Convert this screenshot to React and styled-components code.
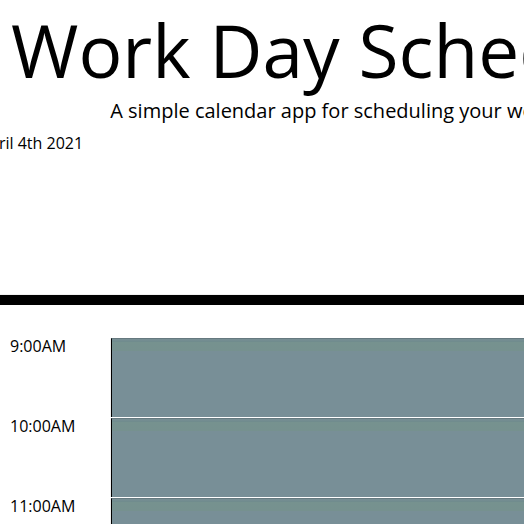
import React from "react";
import styled, { createGlobalStyle } from "styled-components";

const Global = createGlobalStyle`
  html, body { margin: 0; padding: 0; background: #ffffff; overflow: hidden; }
  body { font-family: "Open Sans", "DejaVu Sans", sans-serif; font-size: 16px; line-height: 1; color: #000; }
`;

const Page = styled.div`
  width: 760px;
`;

const Header = styled.header`
  text-align: center;
  padding: 6px 0 0;
  height: 289px;
  border-bottom: 10px solid #000;
  box-shadow: 0 -2px 0 -1px #f0f0f0 inset;
`;

const Title = styled.h1`
  font-size: 73px;
  font-weight: 400;
  line-height: 1.2;
  margin: 0 0 0 -51px;
`;

const Lead = styled.p`
  font-size: 20px;
  font-weight: 400;
  line-height: 1.5;
  margin: 2px 0 0 -58px;
`;

const DateLine = styled.p`
  font-size: 16px;
  font-weight: 400;
  line-height: 1.5;
  margin: 5px 0 0 -21px;
  text-align: left;
`;

const Schedule = styled.main`
  padding-top: 32px;
`;

const Row = styled.div`
  display: flex;
  box-sizing: border-box;
  height: 80px;
  border-top: 1px solid #fff;
`;

const Hour = styled.div`
  width: 100px;
  padding: 0 0 0 10px;
  font-size: 16px;
  line-height: 1;
  border-right: 1px solid #f2f2f2;
  flex: none;
`;

const Task = styled.textarea`
  flex: 1;
  margin: 0;
  padding: 0;
  resize: none;
  border: none;
  border-left: 1px solid #000;
  border-top: 1px solid #66797f;
  background: linear-gradient(#788f95 0, #6f8b8d 3px, #76928f 3px, #76918f 12px, #788f97 12px) #788f97;
  outline: none;
  font-family: inherit;
`;

const hours = ["9:00AM", "10:00AM", "11:00AM", "12:00PM"];

export default function App() {
  return (
    <>
      <Global />
      <Page>
        <Header>
          <Title>Work Day Scheduler</Title>
          <Lead>A simple calendar app for scheduling your work day</Lead>
          <DateLine>April 4th 2021</DateLine>
        </Header>
        <Schedule>
          {hours.map((h) => (
            <Row key={h}>
              <Hour>{h}</Hour>
              <Task aria-label={h} />
            </Row>
          ))}
        </Schedule>
      </Page>
    </>
  );
}
